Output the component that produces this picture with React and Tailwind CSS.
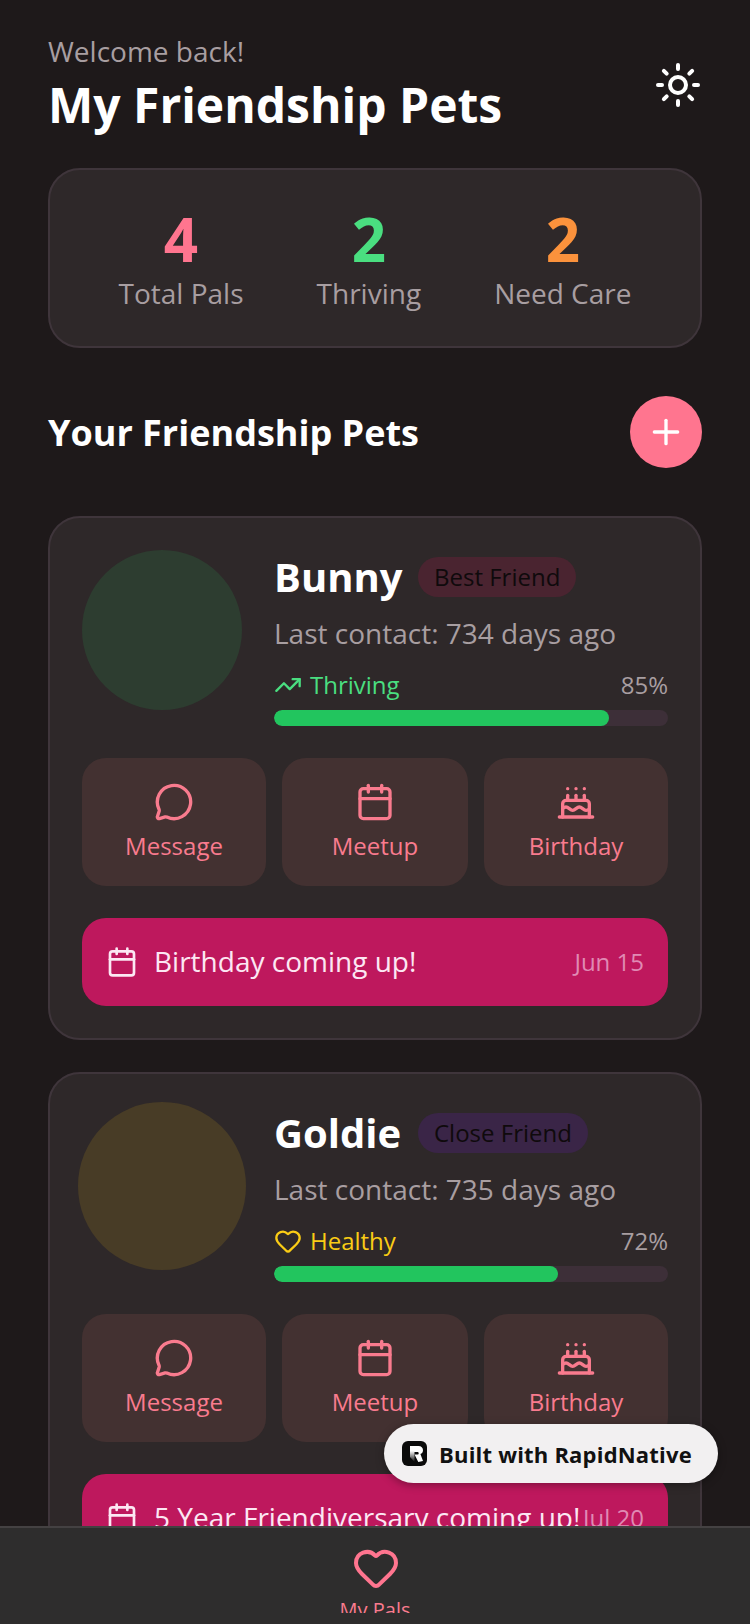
import { Sun, Plus, MessageCircle, Calendar, Cake, TrendingUp, Heart } from "lucide-react";

const pets = [
  {
    name: "Bunny",
    badge: "Best Friend",
    badgeClass: "bg-[#4a2430]",
    avatarClass: "bg-[#2d3d30]",
    avatarSize: "w-[160px] h-[160px]",
    days: 734,
    StatusIcon: TrendingUp,
    status: "Thriving",
    statusClass: "text-[#4ade80]",
    health: 85,
    reminder: "Birthday coming up!",
    date: "Jun 15",
  },
  {
    name: "Goldie",
    badge: "Close Friend",
    badgeClass: "bg-[#3a2547]",
    avatarClass: "bg-[#483c26]",
    avatarSize: "w-[168px] h-[168px] -m-1",
    days: 735,
    StatusIcon: Heart,
    status: "Healthy",
    statusClass: "text-[#facc15]",
    health: 72,
    reminder: "5 Year Friendiversary coming up!",
    date: "Jul 20",
  },
];

const actions = [
  { label: "Message", Icon: MessageCircle },
  { label: "Meetup", Icon: Calendar },
  { label: "Birthday", Icon: Cake },
];

const stats = [
  { value: 4, label: "Total Pals", color: "text-[#ff758f]" },
  { value: 2, label: "Thriving", color: "text-[#4ade80]" },
  { value: 2, label: "Need Care", color: "text-[#fb923c]" },
];

function PetCard({ pet }) {
  const { StatusIcon } = pet;
  return (
    <div className="shrink-0 rounded-[32px] border-2 border-[#3f353b] bg-[#2e2829] p-8">
      <div className="flex items-start gap-8">
        <div className={`shrink-0 rounded-full ${pet.avatarClass} ${pet.avatarSize}`}></div>
        <div className="min-w-0 flex-1">
          <div className="flex items-center gap-4">
            <span className="w-[128px] text-[40px] leading-[54px] font-bold text-white">{pet.name}</span>
            <span className={`rounded-full px-4 text-2xl leading-[40px] text-[#0f0a0c] ${pet.badgeClass}`}>
              {pet.badge}
            </span>
          </div>
          <p className="mt-[10px] text-[28px] leading-[38px] text-[#a89ea1]">
            Last contact: {pet.days} days ago
          </p>
          <div className="mt-[17px] flex items-center justify-between">
            <div className={`flex items-center gap-2 ${pet.statusClass}`}>
              <StatusIcon size={28} />
              <span className="text-2xl leading-[32px]">{pet.status}</span>
            </div>
            <span className="text-2xl leading-[32px] text-[#a89ea1]">{pet.health}%</span>
          </div>
          <div className="mt-[9px] h-4 overflow-hidden rounded-full bg-[#3d2f38]">
            <div className="h-full rounded-full bg-[#22c55e]" style={{ width: `${pet.health}%` }}></div>
          </div>
        </div>
      </div>

      <div className="mt-[32px] grid grid-cols-[184px_186px_1fr] gap-4">
        {actions.map(({ label, Icon }) => (
          <div
            key={label}
            className="flex h-[128px] flex-col items-center justify-center gap-[7px] rounded-3xl bg-[#433131] text-[#f97b8e]"
          >
            <Icon size={40} className="mb-px" />
            <span className="text-2xl leading-[32px]">{label}</span>
          </div>
        ))}
      </div>

      <div className="mt-8 flex h-[88px] items-center rounded-3xl bg-[#be185d] px-6">
        <Calendar size={32} className="shrink-0 text-[#fce7f3]" />
        <span className="mb-[2px] ml-4 flex-1 text-[28px] leading-[38px] whitespace-nowrap text-[#fce7f3]">
          {pet.reminder}
        </span>
        <span className="text-2xl leading-[32px] text-[#e08ab4]">{pet.date}</span>
      </div>
    </div>
  );
}

export default function App() {
  return (
    <div
      className="relative flex h-[1624px] w-[750px] flex-col overflow-hidden bg-[#1e191a] font-['Open_Sans',sans-serif]"
    >
      <main className="min-h-0 flex-1 overflow-hidden px-12 pt-[32px]">
        <div className="flex items-center justify-between">
          <div>
            <p className="text-[28px] leading-[38px] text-[#a89ea1]">Welcome back!</p>
            <h1 className="mt-[2px] text-[48px] leading-[65px] font-bold text-white">My Friendship Pets</h1>
          </div>
          <Sun size={48} className="text-white" />
        </div>

        <div className="mt-[31px] flex h-[180px] items-center justify-around rounded-[32px] border-2 border-[#3f353b] bg-[#2e2829] px-8">
          {stats.map((s) => (
            <div key={s.label} className="flex flex-col items-center">
              <span className={`text-[60px] leading-[68px] font-bold ${s.color}`}>{s.value}</span>
              <span className="mt-px text-[28px] leading-[38px] text-[#a89ea1]">{s.label}</span>
            </div>
          ))}
        </div>

        <div className="mt-[48px] flex items-center justify-between">
          <h2 className="text-[36px] leading-[49px] font-bold text-white">Your Friendship Pets</h2>
          <button className="flex h-[72px] w-[72px] items-center justify-center rounded-full bg-[#ff758f] text-white">
            <Plus size={40} />
          </button>
        </div>

        <div className="mt-12 flex flex-col gap-8">
          {pets.map((pet) => (
            <PetCard key={pet.name} pet={pet} />
          ))}
        </div>
      </main>

      <nav className="flex h-[98px] shrink-0 flex-col items-center border-t-2 border-[#444142] bg-[#2e2d2d] pt-[16px]">
        <Heart size={48} className="ml-[2px] text-[#ff758f]" />
        <div className="mt-[4px] h-[17px] overflow-hidden">
          <span className="block text-xl leading-[28px] text-[#f97b8e]">My Pals</span>
        </div>
      </nav>

      <div className="absolute left-[384px] top-[1424px] flex h-[59px] w-[334px] items-center gap-[12px] rounded-full bg-[#f2f0f1] pl-[18px] shadow-[0_2px_8px_rgba(0,0,0,0.35)]">
        <svg width="25" height="25" viewBox="0 0 25 25">
          <defs>
            <linearGradient id="stem" x1="0" y1="0" x2="0" y2="1">
              <stop offset="0" stopColor="#fff" />
              <stop offset="1" stopColor="#0b0b0b" />
            </linearGradient>
          </defs>
          <rect width="25" height="25" rx="6" fill="#0b0b0b" />
          <path d="M8 5h8.500c2.800 0 4.500 1.800 4.500 4.200 0 2-1 3.300-2.600 3.900l2.600 6.900-4.700 1-3.800-7.500h3c.8 0 1.200-.6 1.200-1.300s-.4-1.300-1.200-1.300H8z" fill="#fff" />
          <path d="M8 9.900h4.500V21L8 16z" fill="url(#stem)" />
        </svg>
        <span className="text-[22px] leading-[32px] font-bold tracking-[0.2px] text-[#111]">Built with RapidNative</span>
      </div>
    </div>
  );
}
